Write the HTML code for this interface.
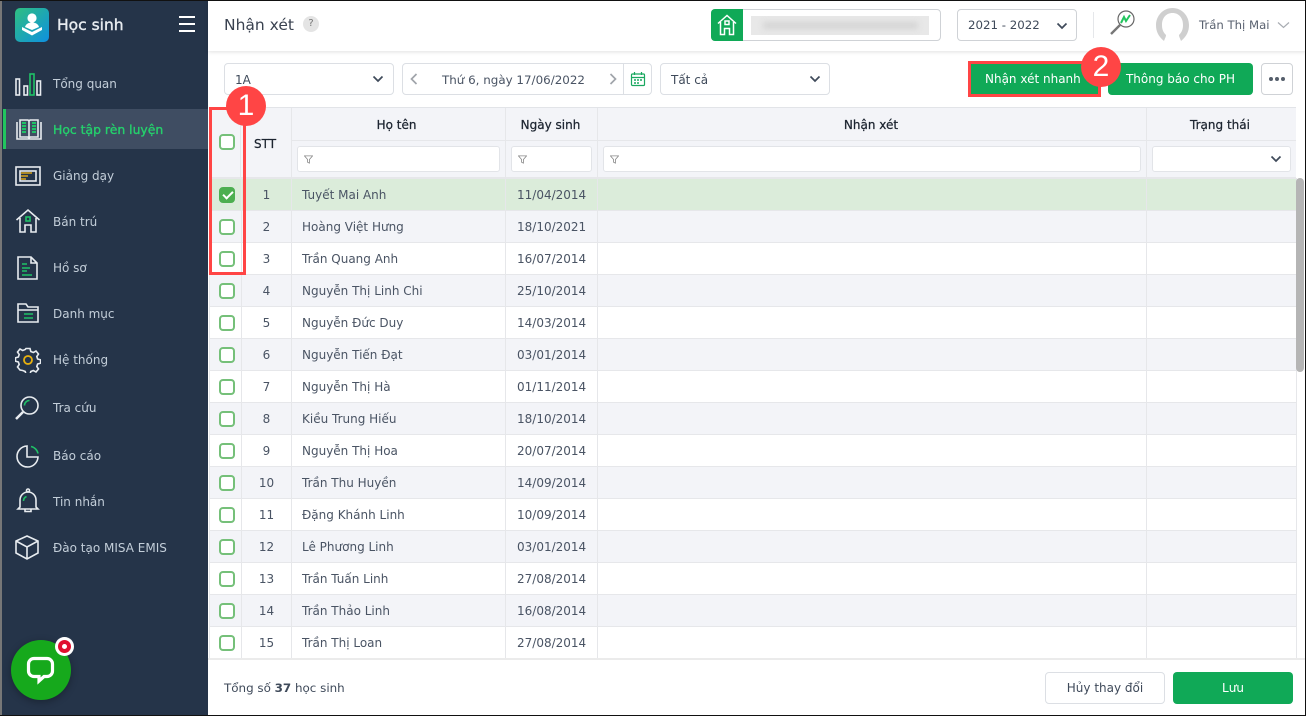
<!DOCTYPE html>
<html><head><meta charset="utf-8"><style>
*{box-sizing:border-box;margin:0;padding:0}
html,body{width:1306px;height:716px;overflow:hidden;background:#fff}
body{position:relative;font:12px "DejaVu Sans","Noto Sans CJK SC",sans-serif;color:#3f4a5a}
.a{position:absolute}
.t{position:absolute;white-space:nowrap;line-height:16px}
.m{position:absolute;left:53px;color:#c3ced9;font-size:12px;line-height:16px;white-space:nowrap}
.ic{position:absolute;fill:none;stroke:#e8ecf0;stroke-width:1.6}
.box{position:absolute;border:1px solid #dcdfe4;border-radius:4px;background:#fff}
.chev{position:absolute;fill:none;stroke:#3f4a5a;stroke-width:1.7}
.btn{position:absolute;background:#10a957;color:#fff;border-radius:4px;text-align:center;font-size:12px}
table{position:absolute;left:209px;top:178px;border-collapse:collapse;table-layout:fixed;width:1087px}
td{height:32px;border:1px solid #e6e7ea;border-left:1px solid #e6e7ea;padding:0;font-size:12px;color:#4a5464;white-space:nowrap;line-height:16px}
tr:nth-child(even) td{background:#f3f4f8}
tr.sel td{background:#dbecda}
td.c{text-align:center}
td.n{padding-left:10px}
td.d{padding-left:11px}
i.cb{display:block;width:16px;height:16px;margin:0 0 0 9px;border:2px solid #75c079;border-radius:4px;background:#fff}
i.on{background:#4caf50;border-color:#4caf50;position:relative}
i.on:after{content:"";position:absolute;left:2px;top:2px;width:8px;height:4px;border:solid #fff;border-width:0 0 2px 2px;transform:rotate(-45deg)}
.th{position:absolute;background:#f3f4f8;border-right:1px solid #e6e7ea;border-bottom:1px solid #e6e7ea}
.hd{position:absolute;text-align:center;color:#1c2430;font-size:12px;-webkit-text-stroke:.25px #1c2430;line-height:16px;white-space:nowrap}
.flt{position:absolute;top:146px;height:26px;background:#fff;border:1px solid #e2e4e8;border-radius:3px}
.flt svg{position:absolute;left:6px;top:8px}
.badge{position:absolute;width:40px;height:40px;border-radius:50%;background:#ff4545;color:#fff;font:30px/40px "Liberation Sans",sans-serif;text-align:center}
</style></head><body>

<!-- sidebar -->
<div class="a" style="left:0;top:0;width:208px;height:716px;background:#253449"></div>
<div class="a" style="left:0;top:0;width:2px;height:716px;background:#777"></div>
<svg class="a" style="left:15px;top:8px" width="34" height="34" viewBox="0 0 34 34"><defs><linearGradient id="g" x1="0" y1="0" x2="1" y2="1"><stop offset="0" stop-color="#2fbf80"/><stop offset="1" stop-color="#0e90e0"/></linearGradient></defs><rect width="34" height="34" rx="5" fill="url(#g)"/><circle cx="17" cy="10" r="4.6" fill="#fff"/><path d="M10 19c1-3.500 4-4.500 7-4.500s6 1 7 4.500l-7 3z" fill="#fff"/><path d="M7 19l10 5 10-5v3l-10 5.500L7 22z" fill="#fff"/></svg>
<div class="t" style="left:57px;top:15px;font-size:15.500px;line-height:20px;color:#e8ecf0;-webkit-text-stroke:.4px #e8ecf0">Học sinh</div>
<div class="a" style="left:179px;top:16px;width:16px;height:2px;background:#fff"></div>
<div class="a" style="left:179px;top:23px;width:16px;height:2px;background:#fff"></div>
<div class="a" style="left:179px;top:30px;width:16px;height:2px;background:#fff"></div>
<div class="a" style="left:3px;top:109px;width:205px;height:40px;background:#3f4d62"></div>
<div class="a" style="left:3px;top:109px;width:3px;height:40px;background:#22c55e"></div>

<svg class="ic" style="left:14px;top:72px" width="28" height="24" viewBox="0 0 28 24"><rect x="2" y="7" width="3.500" height="16"/><rect x="10" y="14" width="3.500" height="9"/><rect x="16" y="2" width="4" height="21" stroke="#1fc267"/><rect x="23" y="9" width="3.500" height="14"/></svg>
<svg class="ic" style="left:14px;top:117px" width="30" height="24" viewBox="0 0 30 24"><path d="M3 5v17h24V5M15 4v18M6 3h8l1 1 1-1h8v17h-8l-1 1-1-1H6z"/><path d="M8 6h4M8 9h4M8 12h4M8 15h4M18 6h4M18 9h4M18 12h4M18 15h4" stroke="#1fc267" stroke-width="2"/></svg>
<svg class="ic" style="left:14px;top:165px" width="28" height="22" viewBox="0 0 28 22"><rect x="2" y="2" width="24" height="18"/><rect x="6" y="6" width="16" height="10"/><path d="M7 8h11M7 11h7M7 14h5" stroke="#d8a41c" stroke-width="1.600"/></svg>
<svg class="ic" style="left:15px;top:208px" width="26" height="26" viewBox="0 0 26 26"><path d="M1.500 12L13 2l11.500 10M5 10v14h5v-7h6v7h5V10"/><rect x="11" y="9" width="4" height="4" stroke="#1fc267"/></svg>
<svg class="ic" style="left:16px;top:255px" width="24" height="26" viewBox="0 0 24 26"><path d="M2 2h13l6 6v16H2zM15 2v6h6"/><path d="M6 9h5M6 13h8M6 16h5M6 20h10" stroke="#1fc267"/></svg>
<svg class="ic" style="left:16px;top:302px" width="24" height="22" viewBox="0 0 24 22"><path d="M2 20V2h8l2 3h10v15zM2 8h20"/><path d="M8 12h9M8 16h9" stroke="#1fc267"/></svg>
<svg class="ic" style="left:15px;top:347px" width="26" height="26" viewBox="0 0 26 26"><path d="M11 2h4l.8 3 2.500 1 2.700-1.500 2.500 3-1.700 2.500.8 2.500 3 .8v3.400l-3 .8-.8 2.500 1.700 2.500-2.500 3-2.700-1.500-2.500 1-.8 3h-4l-.8-3-2.500-1L5 23.500 2.500 20.500 4.200 18l-.8-2.500-3-.8v-3.400l3-.8.8-2.500L2.500 5.500 5 2.500 7.700 4l2.500-1z" transform="translate(0 -.5)"/><circle cx="13" cy="13" r="4" stroke="#e8b10f" stroke-width="1.800"/></svg>
<svg class="ic" style="left:14px;top:395px" width="26" height="26" viewBox="0 0 26 26"><circle cx="15.500" cy="10.500" r="8.500"/><path d="M9 17L2 24" stroke-width="2.500"/><path d="M10.500 10.500a5 5 0 0 1 5-5" stroke="#1fc267"/></svg>
<svg class="ic" style="left:16px;top:444px" width="24" height="24" viewBox="0 0 24 24"><path d="M11 2a10.500 10.500 0 1 0 11 11H11z"/><path d="M15 2.500a9 9 0 0 1 7 7" stroke="#1fc267"/></svg>
<svg class="ic" style="left:16px;top:488px" width="24" height="26" viewBox="0 0 24 26"><path d="M4 19v-7a8 8 0 0 1 16 0v7l2 2H2zM9 21v2.500h6V21"/><circle cx="12" cy="2.500" r="1.500"/><path d="M7.500 13a5 5 0 0 1 3-4.500" stroke="#1fc267"/></svg>
<svg class="ic" style="left:14px;top:534px" width="26" height="26" viewBox="0 0 26 26"><path d="M13 2l11 5v12l-11 6-11-6V7zM2 7l11 6 11-6M13 13v12"/></svg>

<div class="m" style="top:76px">Tổng quan</div>
<div class="m" style="top:122px;color:#25d06c;font-size:12.400px;-webkit-text-stroke:.35px #25d06c">Học tập rèn luyện</div>
<div class="m" style="top:168px">Giảng dạy</div>
<div class="m" style="top:214px">Bán trú</div>
<div class="m" style="top:260px">Hồ sơ</div>
<div class="m" style="top:306px">Danh mục</div>
<div class="m" style="top:352px">Hệ thống</div>
<div class="m" style="top:400px">Tra cứu</div>
<div class="m" style="top:448px">Báo cáo</div>
<div class="m" style="top:494px">Tin nhắn</div>
<div class="m" style="top:540px">Đào tạo MISA EMIS</div>

<div class="a" style="left:11px;top:640px;width:60px;height:60px;border-radius:50%;background:#16a91c;box-shadow:0 2px 8px rgba(0,0,0,.3)"></div>
<svg class="a" style="left:26px;top:656px" width="30" height="30" viewBox="0 0 30 30"><path d="M8 2.500h13a5.500 5.500 0 0 1 5.500 5.500v7a5.500 5.500 0 0 1-5.500 5.500h-3L13 25v-4.500H8A5.500 5.500 0 0 1 2.500 15V8A5.500 5.500 0 0 1 8 2.500z" fill="none" stroke="#fff" stroke-width="3.200"/></svg>
<div class="a" style="left:55px;top:637px;width:19px;height:19px;border-radius:50%;background:#fff"></div>
<div class="a" style="left:58px;top:640px;width:13px;height:13px;border-radius:50%;border:4px solid #e0102f;background:#fff"></div>

<!-- top bar -->
<div class="a" style="left:208px;top:0;width:1098px;height:51px;background:#fff;box-shadow:0 1px 4px rgba(0,0,0,.12)"></div>
<div class="t" style="left:224px;top:15px;font-size:15.500px;line-height:20px;color:#3a4250">Nhận xét</div>
<div class="a" style="left:303px;top:16px;width:16px;height:16px;border-radius:50%;background:#e4e4e4;color:#777;font-size:10px;line-height:16px;text-align:center">?</div>

<div class="box" style="left:711px;top:9px;width:230px;height:32px;border-color:#cfd2d6"></div>
<div class="a" style="left:711px;top:9px;width:32px;height:32px;background:#10a957;border-radius:4px 0 0 4px"></div>
<svg class="a" style="left:717px;top:14px;fill:none;stroke:#fff;stroke-width:1.500" width="20" height="22" viewBox="0 0 20 22"><path d="M1 9.500L10 1.500l9 8M3.500 8v12.500h4v-6h5v6h4V8"/><rect x="8" y="7" width="4" height="3.500"/></svg>
<div class="a" style="left:751px;top:16px;width:178px;height:19px;background:#e8e8e8;overflow:hidden"><div class="a" style="left:12px;top:6px;width:155px;height:7px;background:#d4d4d4;filter:blur(3px)"></div></div>

<div class="box" style="left:957px;top:9px;width:120px;height:32px;border-color:#cfd2d6"></div>
<div class="t" style="left:968px;top:17px;color:#3f4a5a;font-size:11.800px">2021 - 2022</div>
<svg class="chev" style="left:1056px;top:22px" width="12" height="8" viewBox="0 0 12 8"><path d="M1.500 1.500L6 6l4.500-4.500"/></svg>
<div class="a" style="left:1093px;top:12px;width:1px;height:26px;background:#e5e7ea"></div>
<svg class="a" style="left:1109px;top:9px;fill:none" width="28" height="27" viewBox="0 0 28 27"><circle cx="17" cy="10" r="8" stroke="#666" stroke-width="1.200"/><path d="M11 16l-9 9" stroke="#777" stroke-width="2.400"/><path d="M12 14l3-6 2 4 4-6" stroke="#22c55e" stroke-width="2"/></svg>
<svg class="a" style="left:1155px;top:8px" width="35" height="34" viewBox="0 0 35 34"><path d="M9 33C3 28 1 23 1 17 1 8 8 0 17.500 0S34 8 34 17c0 6-2 11-8 16-1-3-2-4-2-6 3-3 4-6 4-10 0-7-4-12-10.500-12S7 10 7 17c0 4 1 7 4 10 0 2-1 3-2 6z" fill="#cfcfcf"/></svg>
<div class="t" style="left:1199px;top:17px;color:#5a6270;font-size:11.700px">Trần Thị Mai</div>
<svg class="chev" style="left:1277px;top:21px;stroke:#a8acb2;stroke-width:1.200" width="13" height="8" viewBox="0 0 13 8"><path d="M1 1.500L6.500 6.500 12 1.500"/></svg>

<!-- toolbar -->
<div class="box" style="left:224px;top:63px;width:170px;height:32px"></div>
<div class="t" style="left:235px;top:72px">1A</div>
<svg class="chev" style="left:372px;top:75px" width="12" height="8" viewBox="0 0 12 8"><path d="M1.500 1.500L6 6l4.500-4.500"/></svg>
<div class="box" style="left:402px;top:63px;width:250px;height:32px"></div>
<svg class="chev" style="left:410px;top:73px;stroke:#a0a4aa" width="8" height="12" viewBox="0 0 8 12"><path d="M6.500 1L1.500 6l5 5"/></svg>
<div class="t" style="left:442px;top:72px;color:#4a5464;font-size:11.900px">Thứ 6, ngày 17/06/2022</div>
<svg class="chev" style="left:609px;top:73px;stroke:#a0a4aa" width="8" height="12" viewBox="0 0 8 12"><path d="M1.500 1l5 5-5 5"/></svg>
<div class="a" style="left:623px;top:63px;width:1px;height:32px;background:#dcdfe4"></div>
<svg class="a" style="left:630px;top:71px;fill:none;stroke:#1aa860;stroke-width:1.200" width="16" height="16" viewBox="0 0 16 16"><rect x="1.500" y="3" width="13" height="11.500" rx="1"/><path d="M1.500 6.500h13M4.500 1v3M11.500 1v3"/><path d="M4 9h2M7 9h2M10 9h2M4 12h2M7 12h2" stroke-width="1.400"/></svg>
<div class="box" style="left:660px;top:63px;width:170px;height:32px"></div>
<div class="t" style="left:671px;top:72px">Tất cả</div>
<svg class="chev" style="left:809px;top:75px" width="12" height="8" viewBox="0 0 12 8"><path d="M1.500 1.500L6 6l4.500-4.500"/></svg>

<div class="btn" style="left:971px;top:63px;width:127px;height:32px;border-radius:0;line-height:33px;text-align:left;padding-left:14px">Nhận xét nhanh</div>
<div class="a" style="left:968px;top:61px;width:133px;height:36px;border:3px solid #ff4545"></div>
<div class="btn" style="left:1108px;top:63px;width:145px;height:32px;line-height:33px">Thông báo cho PH</div>
<div class="box" style="left:1261px;top:63px;width:32px;height:32px;border-color:#cfd2d6"></div>
<div class="a" style="left:1269px;top:77px;width:4px;height:4px;border-radius:50%;background:#555e6b;box-shadow:6px 0 #555e6b,12px 0 #555e6b"></div>

<!-- table head -->
<div class="a" style="left:209px;top:107px;width:1087px;height:1px;background:#e2e4e8"></div>
<div class="th" style="left:209px;top:108px;width:32px;height:70px"></div>
<div class="th" style="left:241px;top:108px;width:51px;height:70px"></div>
<div class="th" style="left:292px;top:108px;width:214px;height:33px"></div>
<div class="th" style="left:506px;top:108px;width:92px;height:33px"></div>
<div class="th" style="left:598px;top:108px;width:549px;height:33px"></div>
<div class="th" style="left:1147px;top:108px;width:149px;height:33px;border-right:0"></div>
<div class="th" style="left:292px;top:141px;width:214px;height:37px"></div>
<div class="th" style="left:506px;top:141px;width:92px;height:37px"></div>
<div class="th" style="left:598px;top:141px;width:549px;height:37px"></div>
<div class="th" style="left:1147px;top:141px;width:149px;height:37px;border-right:0"></div>
<i class="cb a" style="left:210px;top:134px"></i>
<div class="hd" style="left:241px;top:136px;width:48px">STT</div>
<div class="hd" style="left:290px;top:117px;width:213px">Họ tên</div>
<div class="hd" style="left:505px;top:117px;width:91px">Ngày sinh</div>
<div class="hd" style="left:597px;top:117px;width:548px">Nhận xét</div>
<div class="hd" style="left:1147px;top:117px;width:146px">Trạng thái</div>
<div class="flt" style="left:297px;width:203px"><svg width="9" height="9" viewBox="0 0 10 10" fill="none" stroke="#888" stroke-width=".9"><path d="M.5 1h9L6 5v4L4 8V5z"/></svg></div>
<div class="flt" style="left:511px;width:81px"><svg width="9" height="9" viewBox="0 0 10 10" fill="none" stroke="#888" stroke-width=".9"><path d="M.5 1h9L6 5v4L4 8V5z"/></svg></div>
<div class="flt" style="left:603px;width:538px"><svg width="9" height="9" viewBox="0 0 10 10" fill="none" stroke="#888" stroke-width=".9"><path d="M.5 1h9L6 5v4L4 8V5z"/></svg></div>
<div class="flt" style="left:1152px;width:139px"></div>
<svg class="chev" style="left:1270px;top:155px" width="12" height="8" viewBox="0 0 12 8"><path d="M1.500 1.500L6 6l4.500-4.500"/></svg>

<!-- rows -->
<table><colgroup><col style="width:32px"><col style="width:50px"><col style="width:214px"><col style="width:92px"><col style="width:549px"><col style="width:150px"></colgroup><tbody>
<tr class="sel"><td><i class="cb on"></i></td><td class="c">1</td><td class="n">Tuyết Mai Anh</td><td class="d">11/04/2014</td><td></td><td></td></tr>
<tr><td><i class="cb"></i></td><td class="c">2</td><td class="n">Hoàng Việt Hưng</td><td class="d">18/10/2021</td><td></td><td></td></tr>
<tr><td><i class="cb"></i></td><td class="c">3</td><td class="n">Trần Quang Anh</td><td class="d">16/07/2014</td><td></td><td></td></tr>
<tr><td><i class="cb"></i></td><td class="c">4</td><td class="n">Nguyễn Thị Linh Chi</td><td class="d">25/10/2014</td><td></td><td></td></tr>
<tr><td><i class="cb"></i></td><td class="c">5</td><td class="n">Nguyễn Đức Duy</td><td class="d">14/03/2014</td><td></td><td></td></tr>
<tr><td><i class="cb"></i></td><td class="c">6</td><td class="n">Nguyễn Tiến Đạt</td><td class="d">03/01/2014</td><td></td><td></td></tr>
<tr><td><i class="cb"></i></td><td class="c">7</td><td class="n">Nguyễn Thị Hà</td><td class="d">01/11/2014</td><td></td><td></td></tr>
<tr><td><i class="cb"></i></td><td class="c">8</td><td class="n">Kiều Trung Hiếu</td><td class="d">18/10/2014</td><td></td><td></td></tr>
<tr><td><i class="cb"></i></td><td class="c">9</td><td class="n">Nguyễn Thị Hoa</td><td class="d">20/07/2014</td><td></td><td></td></tr>
<tr><td><i class="cb"></i></td><td class="c">10</td><td class="n">Trần Thu Huyền</td><td class="d">14/09/2014</td><td></td><td></td></tr>
<tr><td><i class="cb"></i></td><td class="c">11</td><td class="n">Đặng Khánh Linh</td><td class="d">10/09/2014</td><td></td><td></td></tr>
<tr><td><i class="cb"></i></td><td class="c">12</td><td class="n">Lê Phương Linh</td><td class="d">03/01/2014</td><td></td><td></td></tr>
<tr><td><i class="cb"></i></td><td class="c">13</td><td class="n">Trần Tuấn Linh</td><td class="d">27/08/2014</td><td></td><td></td></tr>
<tr><td><i class="cb"></i></td><td class="c">14</td><td class="n">Trần Thảo Linh</td><td class="d">16/08/2014</td><td></td><td></td></tr>
<tr><td><i class="cb"></i></td><td class="c">15</td><td class="n">Trần Thị Loan</td><td class="d">27/08/2014</td><td></td><td></td></tr>
</tbody></table>

<!-- scrollbar -->
<div class="a" style="left:1296px;top:178px;width:8px;height:194px;background:#b5b5b5;border-radius:4px"></div>

<!-- footer -->
<div class="a" style="left:208px;top:658px;width:1098px;height:58px;background:#fff;border-top:2px solid #ebebeb"></div>
<div class="t" style="left:224px;top:680px;color:#3f4a5a;font-size:11.900px">Tổng số <b>37</b> học sinh</div>
<div class="box" style="left:1045px;top:672px;width:120px;height:32px;line-height:30px;text-align:center;color:#3f4a5a">Hủy thay đổi</div>
<div class="btn" style="left:1173px;top:672px;width:120px;height:32px;line-height:32px">Lưu</div>

<!-- annotations -->
<div class="a" style="left:209px;top:107px;width:37px;height:168px;border:3px solid #ff4545"></div>
<div class="badge" style="left:226px;top:86px">1</div>
<div class="badge" style="left:1081px;top:47px">2</div>

<!-- screenshot edges -->
<div class="a" style="left:0;top:0;width:1306px;height:1px;background:#111"></div>
<div class="a" style="left:0;top:715px;width:1306px;height:1px;background:#111"></div>
<div class="a" style="left:1305px;top:0;width:1px;height:716px;background:#111"></div>
</body></html>
